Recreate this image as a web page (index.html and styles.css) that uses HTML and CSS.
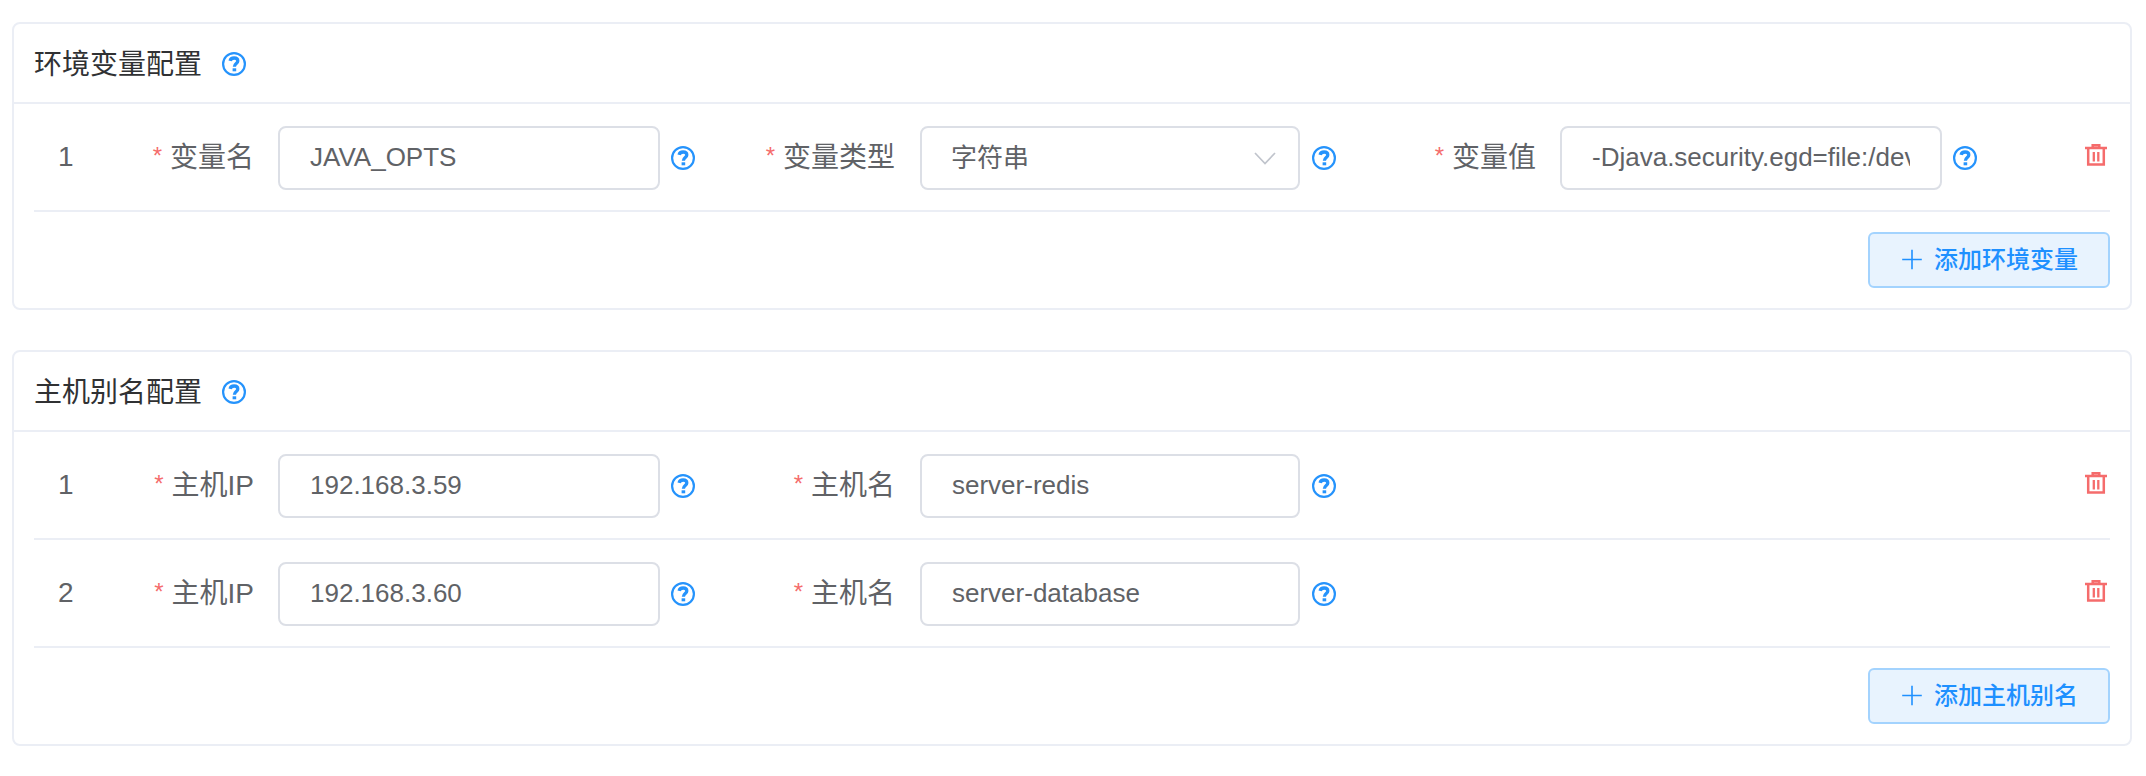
FILE: index.html
```html
<!DOCTYPE html>
<html lang="zh-CN">
<head>
<meta charset="utf-8">
<title>配置</title>
<link rel="stylesheet" href="styles.css">
</head>
<body>
<svg class="defs" width="0" height="0">
  <symbol id="help" viewBox="0 0 24 24">
    <circle cx="12" cy="12" r="10.9" fill="none" stroke="currentColor" stroke-width="2.2"/>
    <path d="M8.100 8.900C8.500 7 10 6 12.100 6c2.200 0 3.700 1.200 3.700 2.900 0 2.600-3.400 2.500-3.400 5.800" fill="none" stroke="currentColor" stroke-width="3.300"/>
    <rect x="10.600" y="16.300" width="3.600" height="3" fill="currentColor"/>
  </symbol>
  <symbol id="trash" viewBox="0 0 22 22">
    <path d="M0 4h22M7.700 4V1.200h6.600V4M3.200 4v16.600h15.600V4" fill="none" stroke="currentColor" stroke-width="2.500"/>
    <path d="M8.800 8v9.600M13.300 8v9.600" fill="none" stroke="currentColor" stroke-width="2.300"/>
  </symbol>
  <symbol id="plus" viewBox="0 0 24 24">
    <path d="M2.200 11.500h19.600M12 1.700v19.600" fill="none" stroke="currentColor" stroke-width="1.600"/>
  </symbol>
</svg>

<section class="card">
  <header class="card-header"><span>环境变量配置</span><svg class="help"><use href="#help"/></svg></header>
  <div class="card-body">
    <div class="row">
      <span class="index">1</span>
      <div class="field"><label class="label"><i class="star">*</i>变量名</label><input class="input" value="JAVA_OPTS"><svg class="help"><use href="#help"/></svg></div>
      <div class="field middle"><label class="label"><i class="star">*</i>变量类型</label><div class="input select"><span>字符串</span><svg class="chevron" viewBox="0 0 22 13"><path d="M1 1l10 10.500L21 1" fill="none" stroke="currentColor" stroke-width="1.700"/></svg></div><svg class="help"><use href="#help"/></svg></div>
      <div class="field"><label class="label"><i class="star">*</i>变量值</label><input class="input" value="-Djava.security.egd=file:/dev/./urandom"><svg class="help"><use href="#help"/></svg></div>
      <svg class="trash"><use href="#trash"/></svg>
    </div>
    <div class="actions"><button class="add"><svg class="plus"><use href="#plus"/></svg><span>添加环境变量</span></button></div>
  </div>
</section>

<section class="card">
  <header class="card-header"><span>主机别名配置</span><svg class="help"><use href="#help"/></svg></header>
  <div class="card-body">
    <div class="row">
      <span class="index">1</span>
      <div class="field"><label class="label"><i class="star">*</i>主机IP</label><input class="input" value="192.168.3.59"><svg class="help"><use href="#help"/></svg></div>
      <div class="field middle"><label class="label"><i class="star">*</i>主机名</label><input class="input" value="server-redis"><svg class="help"><use href="#help"/></svg></div>
      <svg class="trash"><use href="#trash"/></svg>
    </div>
    <div class="row">
      <span class="index">2</span>
      <div class="field"><label class="label"><i class="star">*</i>主机IP</label><input class="input" value="192.168.3.60"><svg class="help"><use href="#help"/></svg></div>
      <div class="field middle"><label class="label"><i class="star">*</i>主机名</label><input class="input" value="server-database"><svg class="help"><use href="#help"/></svg></div>
      <svg class="trash"><use href="#trash"/></svg>
    </div>
    <div class="actions"><button class="add"><svg class="plus"><use href="#plus"/></svg><span>添加主机别名</span></button></div>
  </div>
</section>
</body>
</html>
```
FILE: styles.css
```css
* {
  box-sizing: border-box;
}

body {
  margin: 0;
  padding: 22px 14px 0 12px;
  display: flex;
  flex-direction: column;
  gap: 40px;
  background: #fff;
  color: #606266;
  font-family: "Liberation Sans", "Noto Sans CJK SC", sans-serif;
  font-size: 28px;
}

svg {
  display: block;
  flex: none;
  overflow: visible;
}

.defs {
  position: absolute;
}

.card {
  border: 2px solid #ebeef5;
  border-radius: 8px;
}

.card-header {
  height: 80px;
  padding: 2px 20px 0;
  display: flex;
  align-items: center;
  gap: 20px;
  border-bottom: 2px solid #ebeef5;
  color: #303133;
  line-height: 40px;
}

.card-header span {
  padding-top: 2px;
}

.card-body {
  padding: 0 20px;
}

.row {
  height: 108px;
  padding: 22px 3px 20px 0;
  display: grid;
  grid-template-columns: 100px 640px 642px 1fr 22px;
  border-bottom: 2px solid #ebeef5;
}

.index {
  padding-left: 24px;
  line-height: 61px;
}

.field {
  display: flex;
  align-items: center;
}

.label {
  width: 144px;
  height: 64px;
  padding-right: 24px;
  display: flex;
  justify-content: flex-end;
  line-height: 63px;
  white-space: nowrap;
}

.middle .label {
  width: 146px;
  padding-right: 25px;
}

.star {
  margin-right: 8px;
  color: #f56c6c;
  font-size: 24px;
  font-style: normal;
  line-height: 60px;
}

.input {
  width: 382px;
  height: 64px;
  padding: 0 30px 2px;
  border: 2px solid #dcdfe6;
  border-radius: 8px;
  outline: none;
  background: #fff;
  color: #606266;
  font-family: inherit;
  font-size: 26px;
}

.middle .input {
  width: 380px;
}

.select {
  padding: 0 22px 0 29px;
  display: flex;
  align-items: center;
  justify-content: space-between;
  line-height: 60px;
}

.chevron {
  width: 22px;
  height: 13px;
  color: #c0c4cc;
}

.help {
  width: 24px;
  height: 24px;
  color: #2593fc;
}

.field .help {
  margin-left: 11px;
}

.middle .help {
  margin-left: 12px;
}

.trash {
  grid-column: 5;
  width: 22px;
  height: 22px;
  margin-top: 18px;
  color: #f56c6c;
}

.actions {
  padding: 20px 0;
  display: flex;
  justify-content: flex-end;
}

.add {
  height: 56px;
  padding: 0 30px;
  display: flex;
  align-items: center;
  gap: 10px;
  border: 2px solid #a3d3fe;
  border-radius: 6px;
  background: #e8f3fe;
  color: #1e90ff;
  font-family: inherit;
  font-size: 24px;
  font-weight: 500;
  line-height: 24px;
}

.plus {
  width: 24px;
  height: 24px;
}
```
